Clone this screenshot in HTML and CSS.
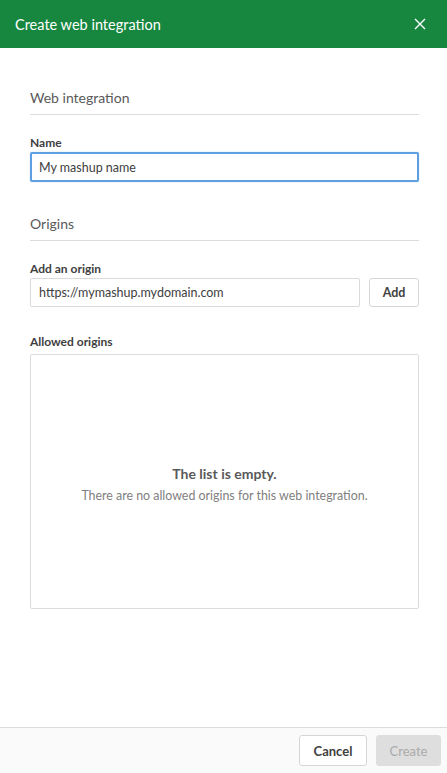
FILE: index.html
```html
<!DOCTYPE html>
<html>
<head>
<meta charset="utf-8">
<link rel="stylesheet" href="styles.css">
</head>
<body>
<div class="dialog">
  <header class="header">
    <span class="title">Create web integration</span>
    <svg class="close" width="12" height="12" viewBox="0 0 12 12"><path d="M1 1L11 11M11 1L1 11" stroke="#fff" stroke-width="1.4" fill="none"/></svg>
  </header>
  <main class="body">
    <h2 class="section">Web integration</h2>
    <label class="label">Name</label>
    <div class="input focus">My mashup name</div>
    <h2 class="section second">Origins</h2>
    <label class="label">Add an origin</label>
    <div class="row">
      <div class="input grow">https://mymashup.mydomain.com</div>
      <button class="btn">Add</button>
    </div>
    <label class="label allowed">Allowed origins</label>
    <div class="list">
      <div class="empty-title">The list is empty.</div>
      <div class="empty-sub">There are no allowed origins for this web integration.</div>
    </div>
  </main>
  <footer class="footer">
    <button class="btn fbtn">Cancel</button>
    <button class="btn fbtn disabled">Create</button>
  </footer>
</div>
</body>
</html>
```
FILE: styles.css
```css
* { box-sizing: border-box; }
html, body { margin: 0; padding: 0; height: 100%; }
body { font-family: Lato, "Open Sans", sans-serif; color: #404040; background: #fff; }
.dialog { display: flex; flex-direction: column; height: 773px; }
.header { height: 48px; background: #17873f; display: flex; align-items: center; justify-content: space-between; padding: 0 21px 0 15px; flex-shrink: 0; }
.title { color: #fff; font-size: 14.5px; }
.body { flex: 1; padding: 0 28px 0 30px; }
.section { font-size: 14px; line-height: 17px; font-weight: normal; color: #595959; margin: 0; padding: 41px 0 8px; border-bottom: 1px solid #dcdcdc; }
.section.second { padding-top: 33px; }
.label { display: block; font-size: 12px; line-height: 15px; font-weight: bold; color: #404040; margin: 20px 0 2px; }
.input { height: 29px; border: 1px solid #dadada; border-radius: 2px; font-size: 12.5px; color: #404040; padding: 0 8px; display: flex; align-items: center; }
.input.focus { height: 30px; border: 2px solid #5d9fe0; padding: 0 7px; box-shadow: 0 0 1px #5d9fe0; }
.row { display: flex; gap: 9px; }
.grow { flex: 1; }
.btn { font-family: inherit; font-size: 12.5px; font-weight: bold; color: #404040; background: #fff; border: 1px solid #d6d6d6; border-radius: 3px; height: 29px; width: 50px; padding: 0; }
.allowed { margin-top: 27px; margin-bottom: 5px; }
.list { height: 255px; border: 1px solid #dcdcdc; border-radius: 2px; display: flex; flex-direction: column; align-items: center; justify-content: center; padding-top: 4px; }
.empty-title { font-size: 14px; font-weight: bold; color: #595959; }
.empty-sub { font-size: 12.4px; color: #808080; margin-top: 6px; }
.footer { height: 46px; flex-shrink: 0; border-top: 1px solid #dcdcdc; background: #fafafa; display: flex; align-items: center; justify-content: flex-end; gap: 9px; padding: 0 6px 0 0; }
.fbtn { width: 68px; height: 31px; font-size: 13px; }
.fbtn.disabled { width: 65px; background: #dedede; border-color: #dedede; color: #aaaaaa; font-weight: normal; }
```
